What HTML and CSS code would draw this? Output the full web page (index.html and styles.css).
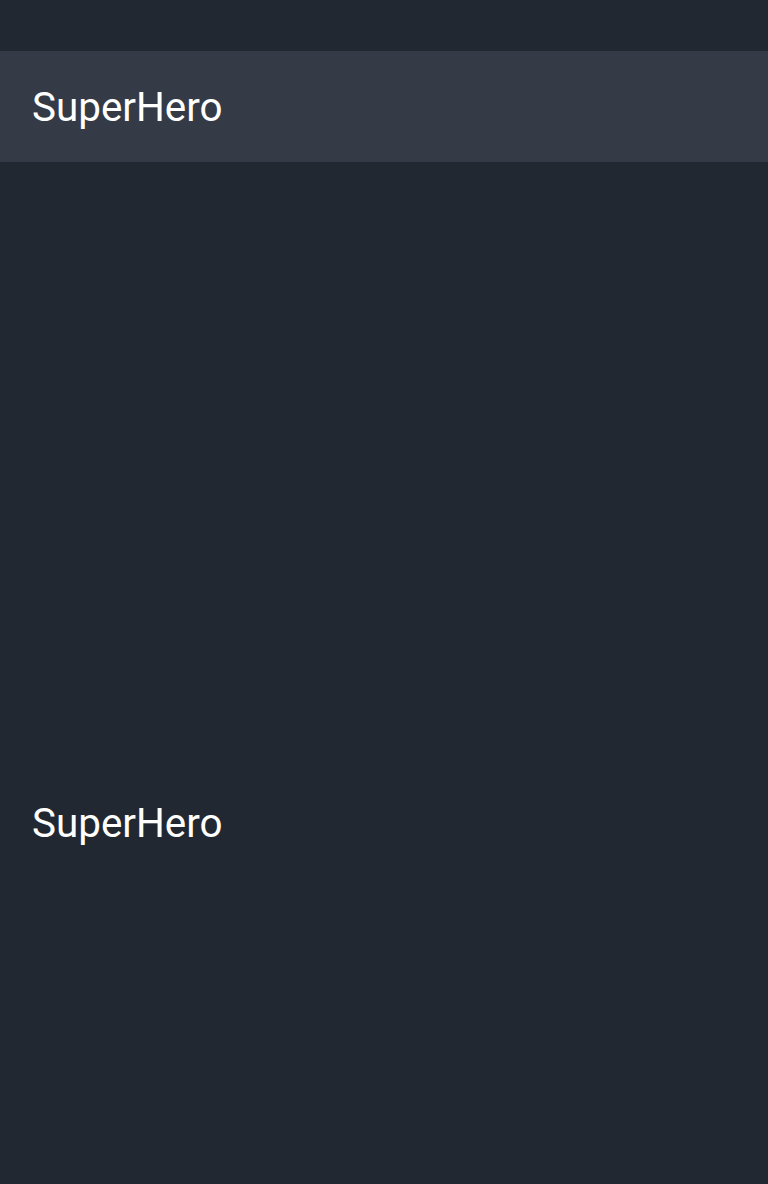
FILE: index.html
```html
<!DOCTYPE html>
<html>
<head>
<meta charset="utf-8">
<link rel="stylesheet" href="styles.css">
</head>
<body>
<div class="status-bar"></div>
<header class="app-bar"><h1 class="title">SuperHero</h1></header>
<main class="content"><p class="label">SuperHero</p></main>
</body>
</html>
```
FILE: styles.css
```css
html, body {
  margin: 0;
  padding: 0;
  background: #222831;
  height: 100%;
}
body {
  font-family: Roboto, "Noto Sans", sans-serif;
  color: #ffffff;
  display: flex;
  flex-direction: column;
}
.status-bar {
  height: 51px;
  background: #222831;
}
.app-bar {
  height: 111px;
  background: #343a46;
  display: flex;
  align-items: center;
  padding-left: 32px;
}
.title {
  margin: 0;
  padding-top: 4px;
  font-size: 40.4px;
  font-weight: 400;
  line-height: 1;
}
.content {
  flex: 1;
  padding-left: 32px;
  padding-top: 642px;
}
.label {
  margin: 0;
  font-size: 40.4px;
  line-height: 1;
}
```
